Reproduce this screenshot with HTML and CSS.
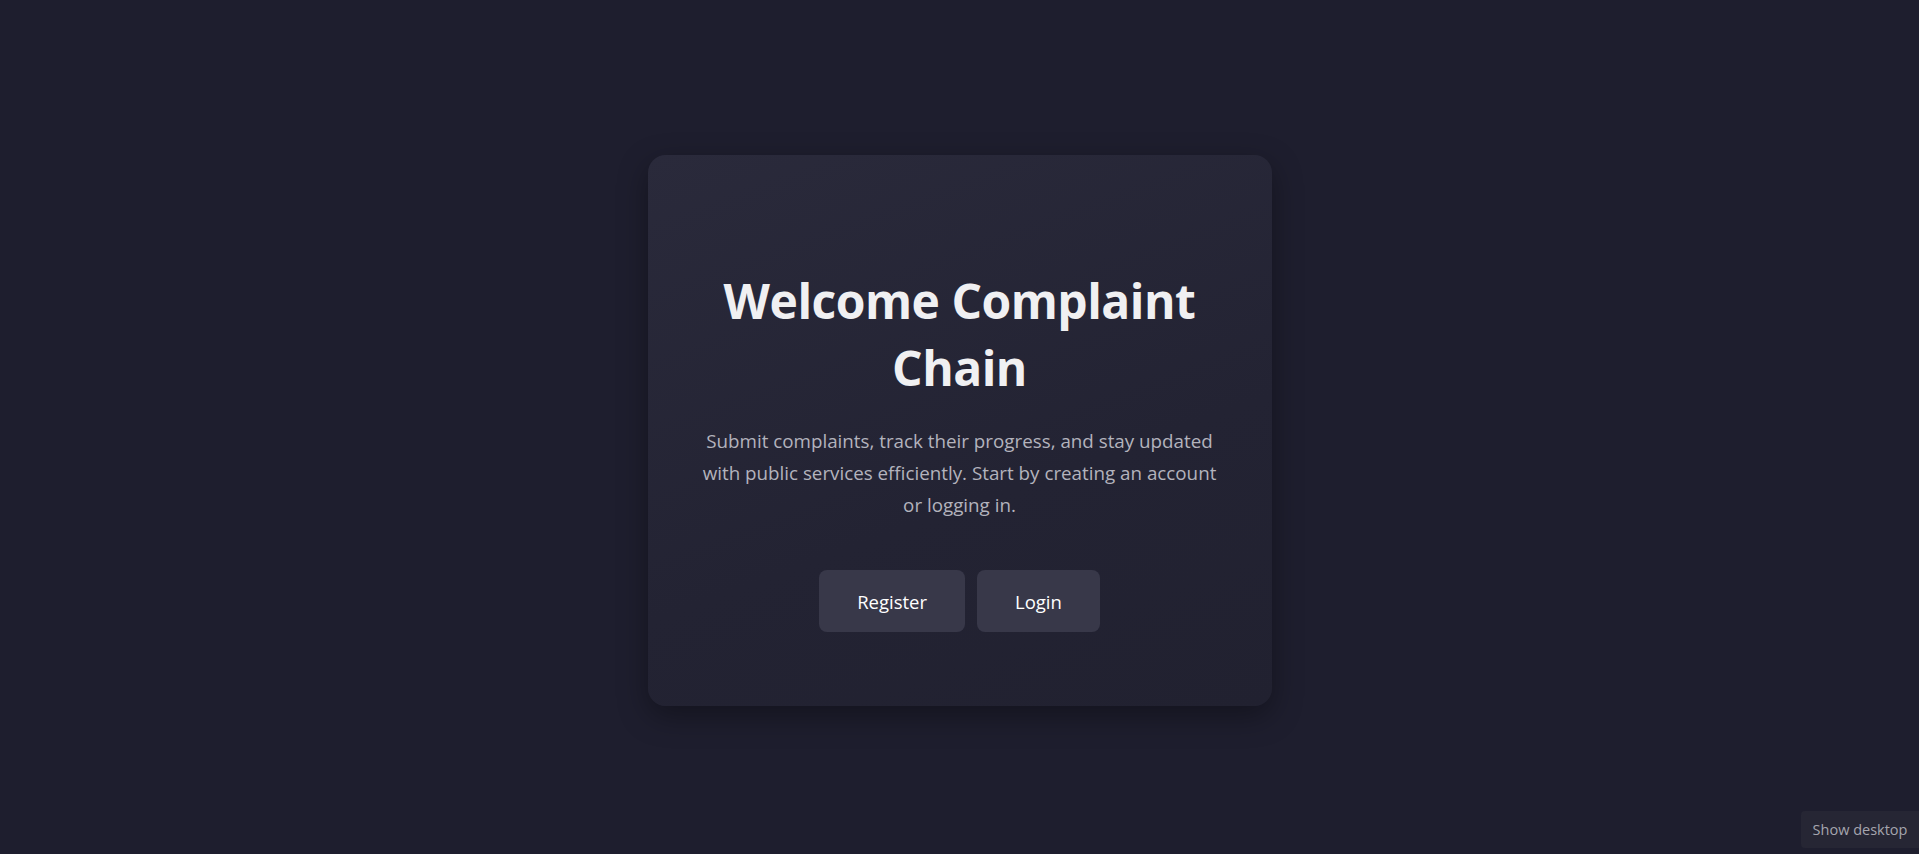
FILE: index.html
```html
<!DOCTYPE html>
<html lang="en">
<head>
<meta charset="utf-8">
<title>Complaint Chain</title>
<link rel="stylesheet" href="styles.css">
</head>
<body>
<main class="page">
  <section class="card">
    <h1 class="title">Welcome Complaint Chain</h1>
    <p class="lead">Submit complaints, track their progress, and stay updated with public services efficiently. Start by creating an account or logging in.</p>
    <div class="actions">
      <a class="btn" href="#">Register</a>
      <a class="btn" href="#">Login</a>
    </div>
  </section>
</main>
<div class="show-desktop">Show desktop</div>
</body>
</html>
```

FILE: styles.css
```css
* { box-sizing: border-box; }
html, body { margin: 0; height: 100%; }
body {
  background: #1e1e2e;
  font-family: "Open Sans", "Noto Sans", sans-serif;
  color: #f2f2f2;
  overflow: hidden;
}
.page {
  height: 100%;
  display: flex;
  align-items: center;
  justify-content: center;
}
.card {
  width: 624px;
  height: 551px;
  margin-top: 7px;
  padding: 112px 48px 48px;
  border-radius: 18px;
  background: linear-gradient(160deg, #2a2a3b 0%, #232333 60%, #212130 100%);
  box-shadow: 0 10px 30px rgba(0, 0, 0, 0.35);
  text-align: center;
  display: flex;
  flex-direction: column;
  align-items: center;
}
.title {
  margin: 0;
  font-size: 48px;
  line-height: 67px;
  font-weight: 700;
  color: #f0f0f2;
  letter-spacing: -0.5px;
}
.lead {
  margin: 24px 0 0;
  font-size: 18.8px;
  line-height: 32px;
  color: #b3b3bd;
}
.actions {
  margin-top: 49px;
  display: flex;
  gap: 12px;
}
.btn {
  display: inline-flex;
  align-items: center;
  justify-content: center;
  height: 62px;
  padding: 0 38px;
  border-radius: 8px;
  background: #383849;
  color: #ffffff;
  font-size: 18.5px;
  text-decoration: none;
}
.show-desktop {
  position: absolute;
  right: 0;
  bottom: 6px;
  width: 118px;
  height: 37px;
  display: flex;
  align-items: center;
  justify-content: center;
  background: #262634;
  color: #a5a5ae;
  font-size: 14.5px;
  border-radius: 4px 0 0 4px;
}
```
